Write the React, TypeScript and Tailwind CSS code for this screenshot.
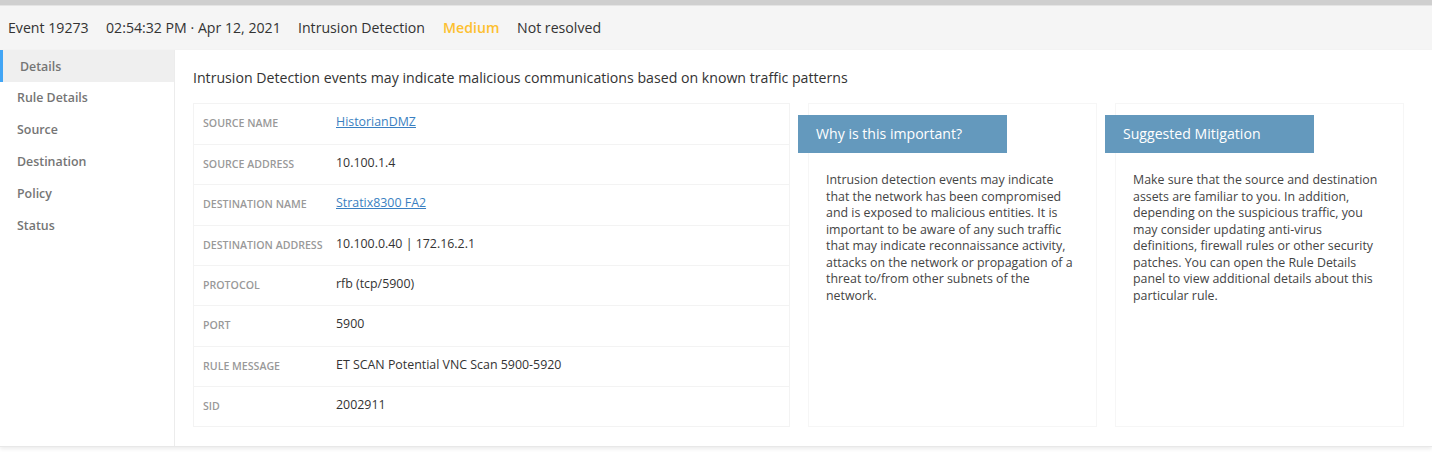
const navItems = ["Rule Details", "Source", "Destination", "Policy", "Status"];

const rows: { label: string; value: string; link?: boolean; h: string }[] = [
  { label: "SOURCE NAME", value: "HistorianDMZ", link: true, h: "h-[40px]" },
  { label: "SOURCE ADDRESS", value: "10.100.1.4", h: "h-[40px]" },
  { label: "DESTINATION NAME", value: "Stratix8300 FA2", link: true, h: "h-[41px]" },
  { label: "DESTINATION ADDRESS", value: "10.100.0.40 | 172.16.2.1", h: "h-[40px]" },
  { label: "PROTOCOL", value: "rfb (tcp/5900)", h: "h-[40px]" },
  { label: "PORT", value: "5900", h: "h-[41px]" },
  { label: "RULE MESSAGE", value: "ET SCAN Potential VNC Scan 5900-5920", h: "h-[40px]" },
  { label: "SID", value: "2002911", h: "h-[40px]" },
];

const notes = [
  {
    title: "Why is this important?",
    lines: [
      "Intrusion detection events may indicate",
      "that the network has been compromised",
      "and is exposed to malicious entities. It is",
      "important to be aware of any such traffic",
      "that may indicate reconnaissance activity,",
      "attacks on the network or propagation of a",
      "threat to/from other subnets of the",
      "network.",
    ],
  },
  {
    title: "Suggested Mitigation",
    lines: [
      "Make sure that the source and destination",
      "assets are familiar to you. In addition,",
      "depending on the suspicious traffic, you",
      "may consider updating anti-virus",
      "definitions, firewall rules or other security",
      "patches. You can open the Rule Details",
      "panel to view additional details about this",
      "particular rule.",
    ],
  },
];

export default function App() {
  return (
    <div className="w-[1432px] h-[453px] overflow-hidden bg-white font-['Open_Sans',sans-serif] text-[#333]">
      <div className="h-[6px] bg-[#cfcfcf] border-b border-[#e4e4e4]" />
      <div className="h-[44px] bg-[#f5f5f5] flex items-center pl-2 text-[14.15px] leading-none">
        <span className="w-[98px]">Event 19273</span>
        <span className="w-[192px]">02:54:32 PM · Apr 12, 2021</span>
        <span className="w-[145px]">Intrusion Detection</span>
        <span className="w-[74px] font-semibold text-[#fdc02f]">Medium</span>
        <span>Not resolved</span>
      </div>

      <div className="flex h-[397px] border-b border-[#e8e8e8] shadow-[0_2px_4px_rgba(0,0,0,0.08)]">
        <div className="w-[175px] shrink-0 border-r border-[#ececec]">
          <div className="h-[31.8px] bg-[#efefef] border-l-[3px] border-[#42a5f5] pl-[17px] pt-[2px] flex items-center text-[12.4px] font-semibold text-[#757575]">
            Details
          </div>
          {navItems.map((item) => (
            <div key={item} className="h-[31.8px] pl-[17px] pt-[2px] flex items-center text-[12.4px] font-semibold text-[#757575]">
              {item}
            </div>
          ))}
        </div>

        <div className="flex-1 pl-[18px] pt-[19px]">
          <p className="text-[14.15px] leading-[18px] text-[#333]">
            Intrusion Detection events may indicate malicious communications based on known traffic patterns
          </p>

          <div className="flex mt-[16px]">
            <div className="w-[597px] h-[324px] border border-[#f3f3f3]">
              {rows.map((row, i) => (
                <div key={row.label} className={`${row.h} flex ${i > 0 ? "border-t border-[#f3f3f3]" : ""}`}>
                  <div className="w-[142px] pl-[9px] shrink-0 pt-[12px] text-[10.6px] leading-[14px] font-semibold text-[#999] whitespace-nowrap">
                    {row.label}
                  </div>
                  <div className="pt-[8.5px] text-[12.4px] leading-[18px]">
                    {row.link ? <span className="text-[#3a7fc1] underline">{row.value}</span> : row.value}
                  </div>
                </div>
              ))}
            </div>

            <div className="flex gap-[18px] ml-[18px]">
              {notes.map((note) => (
                <div key={note.title} className="w-[289px] h-[324px] border border-[#f6f6f6] pt-[11px]">
                  <div className="-ml-[11px] w-[209px] h-[38px] bg-[#6499bd] pl-[18px] flex items-center text-[14.1px] text-white">
                    {note.title}
                  </div>
                  <div className="pl-[17px] pt-[19px] text-[12.38px] leading-[16.5px] text-[#444]">
                    {note.lines.map((line) => (
                      <div key={line} className="whitespace-nowrap">{line}</div>
                    ))}
                  </div>
                </div>
              ))}
            </div>
          </div>
        </div>
      </div>
    </div>
  );
}
